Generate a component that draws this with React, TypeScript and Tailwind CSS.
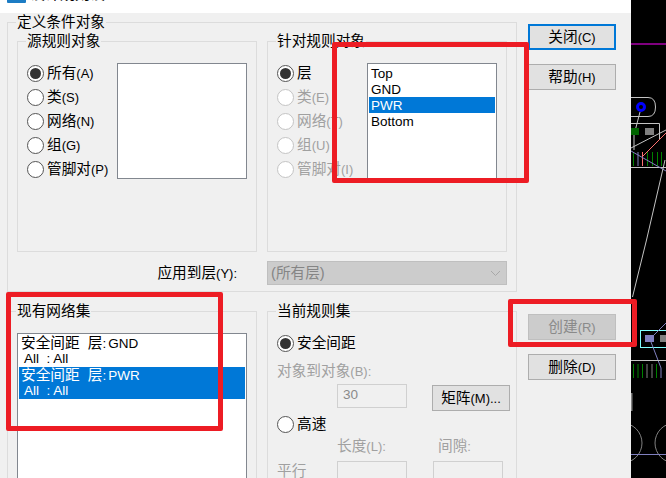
const font = "font-['Liberation_Sans','Noto_Sans_CJK_SC',sans-serif]";

function Radio({ label, hot, checked, disabled }: { label: string; hot: string; checked?: boolean; disabled?: boolean }) {
  return (
    <div className={`flex items-center h-[24px] gap-[3px] ${disabled ? "text-[#a0a0a0]" : "text-black"}`}>
      <span className={`w-[17px] h-[17px] rounded-full border-[1.5px] bg-white flex items-center justify-center shrink-0 ${disabled ? "border-[#c4c4c4]" : "border-[#555555]"}`}>
        {checked && <span className="w-[11px] h-[11px] rounded-full bg-[#333333]" />}
      </span>
      <span className="text-[14.67px] leading-none whitespace-nowrap">
        {label}
        {hot && <span className="text-[13px]">{hot}</span>}
      </span>
    </div>
  );
}

function Group({ title, className, children }: { title: string; className: string; children?: React.ReactNode }) {
  return (
    <div className={`relative border border-[#dcdcdc] ${className}`}>
      <span className="absolute left-[8px] top-[-10px] bg-[#f0f0f0] px-[1px] text-[14.67px] leading-[18px] text-black whitespace-nowrap">{title}</span>
      {children}
    </div>
  );
}

function Btn({ label, hot, kind, className = "" }: { label: string; hot: string; kind?: "default" | "disabled"; className?: string }) {
  const look =
    kind === "default"
      ? "border-2 border-[#0078d7] bg-[#e1e1e1] text-black"
      : kind === "disabled"
        ? "border border-[#bfbfbf] bg-[#cccccc] text-[#8a8a8a]"
        : "border border-[#adadad] bg-[#e1e1e1] text-black";
  return (
    <div className={`h-[26px] shrink-0 flex items-center justify-center text-[14.67px] leading-none ${look} ${className}`}>
      {label}
      <span className="text-[13px]">{hot}</span>
    </div>
  );
}

function Field({ className = "", value }: { className?: string; value?: string }) {
  return (
    <div className={`h-[24px] shrink-0 border border-[#d0d0d0] bg-[#f0f0f0] text-[13.5px] text-[#8a8a8a] leading-[19px] pl-[5px] ${className}`}>{value}</div>
  );
}

function Board() {
  return (
    <svg className="w-[35px] h-[478px] shrink-0 bg-black" viewBox="631 0 35 478" fill="none">
      <path d="M631 44H666" stroke="#ff00ff" />
      <path d="M631 97.5H648Q655.5 97.5 655.5 107Q655.5 116.5 648 116.5H631" stroke="#c4c4c4" />
      <circle cx="641" cy="107" r="3.5" stroke="#0000ff" strokeWidth="3" />
      <path d="M640 112L634 135V150" stroke="#c4c4c4" />
      <rect x="631" y="128" width="8" height="7" fill="#006400" />
      <rect x="645" y="128" width="9" height="7" fill="#808080" />
      <path d="M631 123.5H659.5V140" stroke="#c4c4c4" />
      <path d="M631 148L666 130" stroke="#c4c4c4" />
      <path d="M642 157L666 133" stroke="#ff7070" />
      <path d="M631 167.5H666" stroke="#c4c4c4" />
      <path d="M633.5 152V166M647.5 152V166M652.5 152V166M657.5 152V166M661.5 152V166" stroke="#008000" />
      <path d="M638 152V166" stroke="#8080c0" />
      <path d="M642.5 152V166" stroke="#ff7070" />
      <path d="M631 151L666 171" stroke="#8080c0" />
      <path d="M665 160L646.5 240L632.5 297" stroke="#c4c4c4" />
      <rect x="640.5" y="330.5" width="30" height="17" stroke="#80ffff" />
      <rect x="645" y="335" width="9" height="7" fill="#8080c0" />
      <rect x="660" y="335" width="9" height="7" fill="#808080" />
      <path d="M651 342L661 368V378M654 335L666 323" stroke="#8080c0" />
      <path d="M631 360.5H666" stroke="#c4c4c4" />
      <path d="M633.5 364V378M638 364V378M642.5 364V378M656.5 364V378" stroke="#008000" />
      <path d="M647 364V378M652 364V378" stroke="#808080" />
      <path d="M631.5 393V411" stroke="#808080" strokeWidth="2" />
      <circle cx="622" cy="443" r="20" stroke="#808080" />
      <circle cx="675" cy="443" r="20" stroke="#808080" />
      <path d="M631 454.5H666" stroke="#8080c0" />
    </svg>
  );
}

export default function App() {
  return (
    <div className={`relative w-[666px] h-[478px] flex overflow-hidden ${font}`}>
      <div className="w-[631px] h-full flex flex-col">
        <div className="h-[13px] bg-white shrink-0 flex items-start overflow-hidden pl-[7px] gap-[4px]">
          <div className="w-[19px] h-[3px] bg-[#1c7cc4] rounded-b-[1px] shrink-0" />
          <div className="mt-[-15px] text-[15px] leading-[17px] text-black whitespace-nowrap">设计规则设置</div>
        </div>
        <div className="flex-1 bg-[#f0f0f0] flex gap-[11px] pl-[7px] pt-[9px] overflow-hidden">
          <div className="w-[510px] shrink-0 flex flex-col">
            <Group title="定义条件对象" className="w-[510px] h-[270px] shrink-0 pl-[9px] pt-[18px]">
              <div className="flex gap-[10px]">
                <Group title="源规则对象" className="w-[240px] h-[211px] pl-[9px] pt-[19px]">
                  <div className="flex">
                    <div className="w-[90px] shrink-0">
                      <Radio label="所有" hot="(A)" checked />
                      <Radio label="类" hot="(S)" />
                      <Radio label="网络" hot="(N)" />
                      <Radio label="组" hot="(G)" />
                      <Radio label="管脚对" hot="(P)" />
                    </div>
                    <div className="w-[130px] h-[116px] mt-[2px] bg-white border border-[#82878f]" />
                  </div>
                </Group>
                <Group title="针对规则对象" className="w-[240px] h-[211px] pl-[9px] pt-[19px]">
                  <div className="flex">
                    <div className="w-[90px] shrink-0">
                      <Radio label="层" hot="" checked />
                      <Radio label="类" hot="(E)" disabled />
                      <Radio label="网络" hot="(T)" disabled />
                      <Radio label="组" hot="(U)" disabled />
                      <Radio label="管脚对" hot="(I)" disabled />
                    </div>
                    <div className="w-[130px] h-[116px] mt-[2px] bg-white border border-[#82878f] p-[1px] text-[13.5px] leading-[18px] text-black">
                      <div className="h-[16px] pl-[2px]">Top</div>
                      <div className="h-[16px] pl-[2px]">GND</div>
                      <div className="h-[16px] pl-[2px] bg-[#0078d7] text-white">PWR</div>
                      <div className="h-[16px] pl-[2px]">Bottom</div>
                    </div>
                  </div>
                </Group>
              </div>
              <div className="flex items-center h-[24px] mt-[9px]">
                <div className="w-[250px] text-right pr-[30px] text-[14.67px] leading-none whitespace-nowrap text-black">
                  应用到层<span className="text-[13px]">(Y):</span>
                </div>
                <div className="w-[240px] h-[24px] bg-[#cccccc] border border-[#bfbfbf] flex items-center justify-between pl-[3px] pr-[5px] text-[14.67px] text-[#858585]">
                  (所有层)
                  <svg width="11" height="7" viewBox="0 0 11 7" fill="none"><path d="M1 1L5.5 5.5L10 1" stroke="#a8a8a8" /></svg>
                </div>
              </div>
            </Group>
            <div className="flex gap-[10px] mt-[19px]">
              <Group title="现有网络集" className="w-[250px] h-[200px] pl-[9px] pt-[21px]">
                <div className="w-[230px] h-[200px] bg-white border border-[#82878f] p-[1px] text-black text-[13.5px] leading-[16px]">
                  <div className="h-[16px] pl-[2px] whitespace-nowrap"><span className="text-[14.67px]">安全间距&nbsp; 层</span>:<span className="ml-[2px]">GND</span></div>
                  <div className="h-[16px] pl-[5px]">All&nbsp; : All</div>
                  <div className="h-[16px] pl-[2px] whitespace-nowrap bg-[#0078d7] text-white"><span className="text-[14.67px]">安全间距&nbsp; 层</span>:<span className="ml-[2px]">PWR</span></div>
                  <div className="h-[16px] pl-[5px] bg-[#0078d7] text-white">All&nbsp; : All</div>
                </div>
              </Group>
              <Group title="当前规则集" className="w-[250px] h-[200px] pl-[9px] pt-[19px]">
                <Radio label="安全间距" hot="" checked />
                <div className="text-[14.67px] leading-[18px] text-[#a0a0a0] mt-[7px] whitespace-nowrap">对象到对象<span className="text-[13px]">(B):</span></div>
                <div className="flex items-start mt-[3px]">
                  <Field value="30" className="ml-[60px] w-[70px]" />
                  <Btn label="矩阵" hot="(M)..." className="w-[78px] ml-[25px] mt-[1px]" />
                </div>
                <div className="mt-[1px]"><Radio label="高速" hot="" /></div>
                <div className="flex text-[14.67px] leading-[18px] text-[#a0a0a0] mt-[1px]">
                  <span className="ml-[60px] w-[101px]">长度<span className="text-[13px]">(L):</span></span>
                  <span>间隙<span className="text-[13px]">:</span></span>
                </div>
                <div className="flex items-start mt-[5px] text-[14.67px] text-[#a0a0a0] leading-[18px]">
                  <span className="w-[60px] pt-[1px]">平行</span>
                  <Field className="w-[70px]" />
                  <Field className="w-[70px] ml-[26px]" />
                </div>
              </Group>
            </div>
          </div>
          <div className="w-[88px] flex flex-col pt-[2px]">
            <Btn label="关闭" hot="(C)" kind="default" />
            <Btn label="帮助" hot="(H)" className="mt-[14px]" />
            <Btn label="创建" hot="(R)" kind="disabled" className="mt-[224px]" />
            <Btn label="删除" hot="(D)" className="mt-[14px]" />
          </div>
        </div>
      </div>
      <Board />
      <div className="absolute left-[332px] top-[42px] w-[197px] h-[141px] border-[5px] border-[#ed1c24] rounded-[2px]" />
      <div className="absolute left-[6px] top-[292px] w-[217px] h-[139px] border-[5px] border-[#ed1c24] rounded-[2px]" />
      <div className="absolute left-[508px] top-[299px] w-[129px] h-[48px] border-[5px] border-[#ed1c24] rounded-[2px]" />
    </div>
  );
}
